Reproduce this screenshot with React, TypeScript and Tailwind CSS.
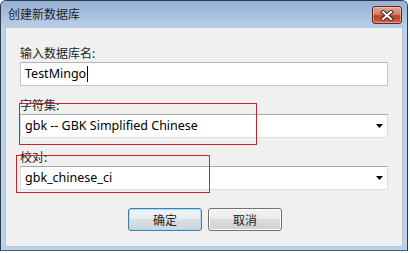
import React from "react";

const latin = { fontFamily: '"Noto Sans", "Noto Sans CJK SC", sans-serif' };
const cjk = { fontFamily: '"Noto Sans CJK SC", "Noto Sans", sans-serif' };

function Arrow() {
  return (
    <svg width="7" height="4" viewBox="0 0 7 4" className="shrink-0">
      <path d="M0 0H7L3.5 4Z" fill="#000" />
    </svg>
  );
}

function Select({ value }: { value: string }) {
  return (
    <div className="h-[24px] bg-white border border-[#dcdcdc] border-t-[#a8a8a8] flex items-center pl-[4px] pr-[4px]">
      <span className="flex-1 text-[12.5px] leading-[16px] text-black" style={latin}>
        {value}
      </span>
      <Arrow />
    </div>
  );
}

export default function App() {
  return (
    <div className="w-[410px] h-[253px] bg-white relative overflow-hidden" style={cjk}>
      <div className="w-[408px] h-[251px] border border-[#2e3a48] rounded-t-[6px] bg-[#bcd2ea] border-b-[#34607f] flex flex-col overflow-hidden">
        {/* title bar */}
        <div className="h-[26px] shrink-0 flex items-start justify-between bg-linear-to-b from-[#95b1d4] to-[#b9cfe9]">
          <span className="pl-[7px] pt-[5px] text-[12px] leading-[16px] text-[#1e1e1e]">创建新数据库</span>
          <div className="mt-[5px] mr-[5px] w-[30px] h-[18px] rounded-[3px] border border-[#5a2a22] bg-[linear-gradient(to_bottom,#e4a592_0%,#d3826c_45%,#bf3e24_55%,#d0634a_100%)] shadow-[inset_0_0_0_1px_rgba(255,220,200,0.45)] flex items-center justify-center">
            <svg width="14" height="11" viewBox="0 0 14 11">
              <path d="M3 2L11 9M11 2L3 9" stroke="#3d2a26" strokeWidth="4" strokeLinecap="square" />
              <path d="M3 2L11 9M11 2L3 9" stroke="#ffffff" strokeWidth="2" strokeLinecap="square" />
            </svg>
          </div>
        </div>
        {/* body */}
        <div className="flex-1 flex px-[4px] pb-[3px]">
          <div className="flex-1 bg-[#f0f0f0] border border-[#b4c6db] px-[14px] pt-[17px] flex flex-col">
            <div className="text-[12px] leading-[16px] text-[#1e1e1e]">输入数据库名:</div>
            <div className="mt-[1px] h-[24px] bg-white border border-[#bfcad7] border-t-[#abb4c0] flex items-center pl-[4px]">
              <span className="text-[12.5px] leading-[16px] text-black" style={latin}>
                TestMingo
              </span>
              <span className="w-[1px] h-[16px] bg-black ml-[1px]" />
            </div>
            <div className="mt-[11px] text-[12px] leading-[16px] text-[#1e1e1e]">字符集:</div>
            <div className="mt-[1px]">
              <Select value="gbk -- GBK Simplified Chinese" />
            </div>
            <div className="mt-[11px] text-[12px] leading-[16px] text-[#1e1e1e]">校对:</div>
            <div className="mt-[1px]">
              <Select value="gbk_chinese_ci" />
            </div>
            <div className="mt-[18px] flex justify-center gap-[6px] pl-[2px]">
              <button className="w-[74px] h-[23px] rounded-[3px] border border-[#3c7fb1] shadow-[inset_0_0_0_1px_#a9dcf6] bg-[linear-gradient(to_bottom,#f1f4f6_0%,#e9edf0_50%,#d9e0e5_50%,#ccd4da_100%)] text-[12px] leading-[16px] text-[#1e1e1e]">
                确定
              </button>
              <button className="w-[74px] h-[23px] rounded-[3px] border border-[#707070] shadow-[inset_0_0_0_1px_#fbfbfb] bg-[linear-gradient(to_bottom,#f2f2f2_0%,#ebebeb_50%,#dddddd_50%,#cfcfcf_100%)] text-[12px] leading-[16px] text-[#1e1e1e]">
                取消
              </button>
            </div>
          </div>
        </div>
      </div>
      {/* annotation boxes */}
      <div className="absolute left-[19px] top-[103px] w-[238px] h-[42px] border border-[#c3262e]" />
      <div className="absolute left-[16px] top-[155px] w-[194px] h-[38px] border border-[#c3262e]" />
    </div>
  );
}
